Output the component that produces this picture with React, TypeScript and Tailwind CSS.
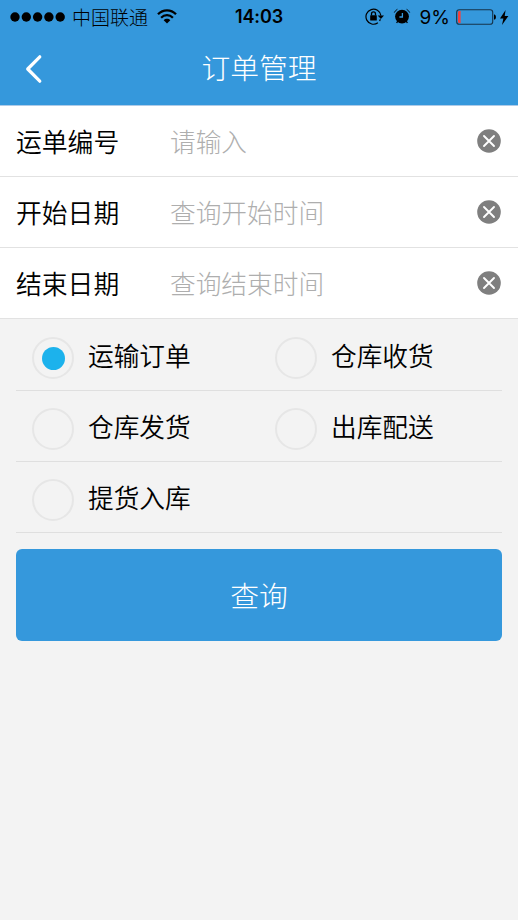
import { useState } from 'react'

const fields = [
  { name: 'code', label: '运单编号', placeholder: '请输入' },
  { name: 'start', label: '开始日期', placeholder: '查询开始时间' },
  { name: 'end', label: '结束日期', placeholder: '查询结束时间' },
]

const optionRows = [['运输订单', '仓库收货'], ['仓库发货', '出库配送'], ['提货入库']]

function StatusBar() {
  return (
    <div className="grid h-[34px] grid-cols-[1fr_auto_1fr] items-center text-black">
      <div className="flex items-center pl-[10px]">
        <svg width="56" height="12" viewBox="0 0 56 12" fill="currentColor">
          <circle cx="5" cy="6" r="4.7" />
          <circle cx="16.3" cy="6" r="4.7" />
          <circle cx="27.6" cy="6" r="4.7" />
          <circle cx="38.9" cy="6" r="4.7" />
          <circle cx="50.2" cy="6" r="4.7" />
        </svg>
        <span className="mb-[2px] ml-[6px] text-[19px] leading-none font-light">中国联通</span>
        <svg className="ml-[9px]" width="20" height="16" viewBox="0 0 20 16" fill="none" stroke="currentColor">
          <path d="M1 5.3C6 0 14 0 19 5.3" strokeWidth="2.3" />
          <path d="M4.1 8.7C7.4 5.3 12.6 5.3 15.9 8.7" strokeWidth="2.2" />
          <path d="M6.7 11.2C8.6 9.3 11.4 9.3 13.3 11.2L10 14.4Z" fill="currentColor" stroke="none" />
        </svg>
      </div>
      <span className="font-['Inter','Noto_Sans_CJK_SC',sans-serif] text-[18px] leading-none font-semibold tracking-[-0.1px]">
        14:03
      </span>
      <div className="flex items-center justify-end pr-[9px]">
        <svg width="20" height="18" viewBox="0 0 20 18" fill="none" stroke="currentColor">
          <path d="M15.9 7.6A7.5 7.5 0 1 0 12.9 14.8" strokeWidth="1.2" />
          <path d="M12.7 7.4H19L15.9 11Z" fill="currentColor" stroke="none" />
          <path d="M15.4 11.2L14.6 13" strokeWidth="1.2" />
          <rect x="5.2" y="7.2" width="6.6" height="5.2" rx=".5" fill="currentColor" stroke="none" />
          <path d="M6.5 7.6V5.9a2 2 0 0 1 4 0V7.6" strokeWidth="1.3" />
        </svg>
        <svg className="ml-[8px]" width="18" height="18" viewBox="0 0 18 18" fill="none" stroke="currentColor">
          <circle cx="9" cy="8.6" r="6.9" fill="currentColor" stroke="none" />
          <path d="M1.3 4.6Q2.2 2.4 4.4 1.3M16.7 4.6Q15.8 2.4 13.6 1.3" strokeWidth="0.9" />
          <path d="M4.8 13.2L3.6 15M13.2 13.2L14.4 15" strokeWidth="1.3" />
          <path d="M9.4 5V9H6.4" stroke="#3598dc" strokeWidth="1.3" />
        </svg>
        <span className="ml-[9px] font-['Inter','Noto_Sans_CJK_SC',sans-serif] text-[19px] leading-none font-normal">
          9%
        </span>
        <svg className="ml-[6px]" width="40" height="16" viewBox="0 0 40 16">
          <rect x=".7" y=".7" width="36" height="14.6" rx="2.6" fill="none" stroke="#16334a" strokeWidth="1.1" />
          <path d="M2 3.2Q2 2 3.2 2H4.6V14H3.2Q2 14 2 12.8Z" fill="#f5403c" />
          <path d="M38 5.2Q40 5.6 40 8T38 10.8Z" fill="#000" />
        </svg>
        <svg className="ml-[3px]" width="10" height="15" viewBox="0 0 10 15" fill="currentColor">
          <path d="M6.6 0L1 8.5H4.4L3 15L9.4 6.1H5.7Z" />
        </svg>
      </div>
    </div>
  )
}

function ClearIcon() {
  return (
    <svg width="24" height="24" viewBox="0 0 24 24" fill="none">
      <circle cx="12" cy="12" r="11.8" fill="#7f7f7f" />
      <path d="M7 7L17 17M17 7L7 17" stroke="#fff" strokeWidth="1.9" strokeLinecap="round" />
    </svg>
  )
}

export default function App() {
  const [values, setValues] = useState<Record<string, string>>({})
  const [selected, setSelected] = useState('运输订单')

  return (
    <main className="min-h-[920px] w-full bg-[#f3f3f3] font-['Noto_Sans_CJK_SC',sans-serif] font-[350] text-black">
      <header className="h-[106px] border-b border-[#aecbe8] bg-[#3598dc]">
        <StatusBar />
        <div className="grid h-[69px] grid-cols-[80px_1fr_80px] items-center">
          <button type="button" aria-label="返回" className="pl-[25px]">
            <svg width="18" height="30" viewBox="0 0 18 30" fill="none">
              <path d="M14.8 2.8L2.7 15L14.8 27.2" stroke="#fff" strokeWidth="3.2" strokeLinecap="round" strokeLinejoin="round" />
            </svg>
          </button>
          <h1 className="mb-[3px] text-center text-[28.8px] leading-none font-light text-white">订单管理</h1>
        </div>
      </header>

      <form onSubmit={(e) => e.preventDefault()}>
        <div className="bg-white">
          {fields.map((field) => (
            <label key={field.name} className="flex h-[71px] items-center border-b border-[#e2e2e2] pr-[17px] pl-4">
              <span className="mb-px w-[154px] text-[25.8px] leading-none">{field.label}</span>
              <input
                value={values[field.name] ?? ''}
                onChange={(e) => setValues({ ...values, [field.name]: e.target.value })}
                placeholder={field.placeholder}
                className="mb-[2px] h-10 min-w-0 flex-1 text-[25.7px] font-light outline-none placeholder:text-[#aeaeae]"
              />
              <button
                type="button"
                aria-label="清除"
                onClick={() => setValues({ ...values, [field.name]: '' })}
              >
                <ClearIcon />
              </button>
            </label>
          ))}
        </div>

        <div className="px-4 pt-px">
          {optionRows.map((row) => (
            <div key={row[0]} className="grid h-[71px] grid-cols-2 border-b border-[#dfdfdf]">
              {row.map((option) => (
                <button
                  key={option}
                  type="button"
                  onClick={() => setSelected(option)}
                  className="flex items-center pl-4"
                >
                  <span className="mt-[6px] flex size-[42px] items-center justify-center rounded-full border-2 border-[#e6e6e6]">
                    {selected === option && <span className="size-[23px] rounded-full bg-[#1cb2ec]" />}
                  </span>
                  <span className="mb-px ml-[14px] text-[25.7px] leading-none">{option}</span>
                </button>
              ))}
            </div>
          ))}
          <button
            type="submit"
            className="mt-4 h-[92px] w-full rounded-md bg-[#3598dc] text-[28.8px] leading-none font-light text-white"
          >
            查询
          </button>
        </div>
      </form>
    </main>
  )
}
